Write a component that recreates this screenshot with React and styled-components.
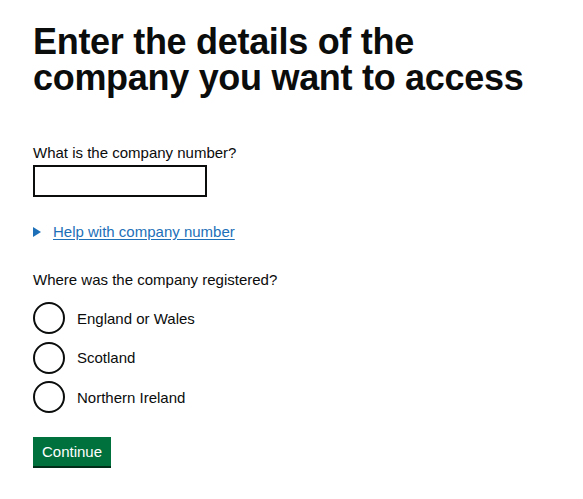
import styled, { createGlobalStyle } from 'styled-components';

const GlobalStyle = createGlobalStyle`
  body {
    margin: 0;
    background: #ffffff;
    color: #0b0c0c;
    font-family: "Liberation Sans", Arial, sans-serif;
  }
`;

const Page = styled.main`
  padding: 24px 33px 30px;
`;

const Heading = styled.h1`
  margin: 0 0 47px;
  font-size: 36px;
  line-height: 36px;
  font-weight: 700;
  letter-spacing: -0.3px;
  max-width: 500px;
`;

const Label = styled.label`
  display: block;
  font-size: 15px;
  line-height: 20px;
  margin-bottom: 2px;
`;

const TextInput = styled.input`
  display: block;
  box-sizing: border-box;
  width: 174px;
  height: 32px;
  border: 2px solid #0b0c0c;
  border-radius: 0;
  margin: 0 0 25px;
  padding: 4px;
  font: inherit;
`;

const Details = styled.div`
  display: flex;
  align-items: center;
  gap: 12px;
  margin-bottom: 28px;
`;

const Triangle = styled.span`
  width: 0;
  height: 0;
  border-top: 5px solid transparent;
  border-bottom: 5px solid transparent;
  border-left: 8px solid #1d70b8;
`;

const HelpLink = styled.a`
  color: #1d70b8;
  font-size: 15px;
  line-height: 20px;
  text-decoration: underline;
  text-underline-offset: 2px;
`;

const Fieldset = styled.fieldset`
  border: 0;
  margin: 0 0 24px;
  padding: 0;
`;

const Legend = styled.legend`
  padding: 0;
  font-size: 15px;
  line-height: 20px;
  margin-bottom: 12px;
`;

const RadioList = styled.div`
  display: flex;
  flex-direction: column;
  gap: 7.5px;
`;

const RadioRow = styled.label`
  display: flex;
  align-items: center;
  gap: 12px;
  font-size: 15px;
`;

const RadioCircle = styled.span`
  box-sizing: border-box;
  width: 32px;
  height: 32px;
  border: 2px solid #0b0c0c;
  border-radius: 50%;
  flex-shrink: 0;
`;

const Button = styled.button`
  background: #00703c;
  color: #ffffff;
  border: 0;
  border-radius: 0;
  box-shadow: 0 2px 0 #002d18;
  font-family: inherit;
  font-size: 15px;
  line-height: 20px;
  padding: 5px 9px 4px;
  cursor: pointer;
`;

const options = ['England or Wales', 'Scotland', 'Northern Ireland'];

export default function App() {
  return (
    <Page>
      <GlobalStyle />
      <Heading>Enter the details of the company you want to access</Heading>
      <Label htmlFor="company-number">What is the company number?</Label>
      <TextInput id="company-number" type="text" />
      <Details>
        <Triangle />
        <HelpLink href="#">Help with company number</HelpLink>
      </Details>
      <Fieldset>
        <Legend>Where was the company registered?</Legend>
        <RadioList>
          {options.map((option) => (
            <RadioRow key={option}>
              <RadioCircle />
              {option}
            </RadioRow>
          ))}
        </RadioList>
      </Fieldset>
      <Button>Continue</Button>
    </Page>
  );
}
